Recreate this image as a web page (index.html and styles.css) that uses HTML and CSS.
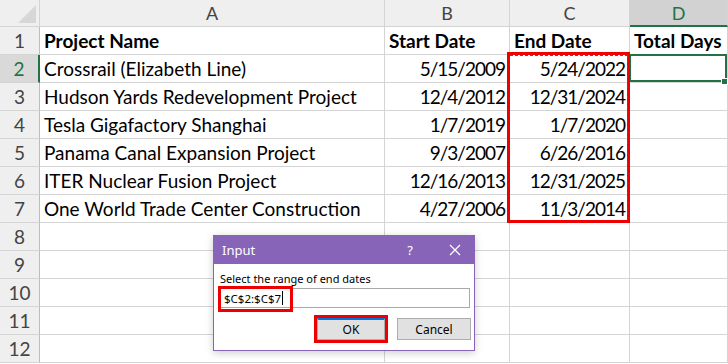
FILE: index.html
```html
<!DOCTYPE html>
<html>
<head>
<meta charset="utf-8">
<link rel="stylesheet" href="styles.css">
</head>
<body>
<div class="sheet">
  <div class="grid">
    <div class="corner"><span class="tri"></span></div>
    <div class="ch">A</div><div class="ch">B</div><div class="ch">C</div><div class="ch ch-sel">D</div>

    <div class="rh">1</div><div class="c bold">Project Name</div><div class="c bold">Start Date</div><div class="c bold">End Date</div><div class="c bold">Total Days</div>
    <div class="rh rh-sel">2</div><div class="c">Crossrail (Elizabeth Line)</div><div class="c num">5/15/2009</div><div class="c num">5/24/2022</div><div class="c active"><span class="handle"></span></div>
    <div class="rh">3</div><div class="c">Hudson Yards Redevelopment Project</div><div class="c num">12/4/2012</div><div class="c num">12/31/2024</div><div class="c"></div>
    <div class="rh">4</div><div class="c">Tesla Gigafactory Shanghai</div><div class="c num">1/7/2019</div><div class="c num">1/7/2020</div><div class="c"></div>
    <div class="rh">5</div><div class="c">Panama Canal Expansion Project</div><div class="c num">9/3/2007</div><div class="c num">6/26/2016</div><div class="c"></div>
    <div class="rh">6</div><div class="c">ITER Nuclear Fusion Project</div><div class="c num">12/16/2013</div><div class="c num">12/31/2025</div><div class="c"></div>
    <div class="rh">7</div><div class="c">One World Trade Center Construction</div><div class="c num">4/27/2006</div><div class="c num">11/3/2014</div><div class="c"></div>
    <div class="rh">8</div><div class="c"></div><div class="c"></div><div class="c"></div><div class="c"></div>
    <div class="rh">9</div><div class="c"></div><div class="c"></div><div class="c"></div><div class="c"></div>
    <div class="rh">10</div><div class="c"></div><div class="c"></div><div class="c"></div><div class="c"></div>
    <div class="rh">11</div><div class="c"></div><div class="c"></div><div class="c"></div><div class="c"></div>
    <div class="rh">12</div><div class="c"></div><div class="c"></div><div class="c"></div><div class="c"></div>
  </div>

  <div class="range"><div class="ants"></div></div>

  <div class="dialog">
    <div class="titlebar">
      <span class="title">Input</span>
      <span class="help">?</span>
      <svg class="close" width="12" height="12" viewBox="0 0 12 12"><path d="M1 1L11 11M11 1L1 11" stroke="#fff" stroke-width="1.3" fill="none"/></svg>
    </div>
    <div class="body">
      <div class="label">Select the range of end dates</div>
      <div class="input"><span class="val">$C$2:$C$7</span><span class="caret"></span></div>
      <div class="buttons">
        <button class="btn ok">OK</button>
        <button class="btn">Cancel</button>
      </div>
    </div>
  </div>
</div>
</body>
</html>
```
FILE: styles.css
```css
html, body {
  margin: 0;
  padding: 0;
  background: #fff;
  overflow: hidden;
}
.sheet {
  position: relative;
  width: 728px;
  height: 364px;
  overflow: hidden;
  font-family: Lato, "Open Sans", sans-serif;
}
.grid {
  display: grid;
  grid-template-columns: 40px 345px 125px 120px 98px;
  grid-template-rows: 27px repeat(12, 28px);
}
.grid > div {
  box-sizing: border-box;
  border-right: 1px solid #d4d4d4;
  border-bottom: 1px solid #d4d4d4;
  white-space: nowrap;
  overflow: visible;
}
.corner {
  background: #efefef;
  position: relative;
}
.corner .tri {
  position: absolute;
  right: 3px;
  bottom: 3px;
  width: 0;
  height: 0;
  border-left: 18px solid transparent;
  border-bottom: 18px solid #d7d7d7;
}
.ch {
  background: #efefef;
  color: #444;
  font-size: 18px;
  text-align: center;
  line-height: 26px;
}
.ch-sel {
  background: #d2d2d2;
  color: #217346;
  border-bottom: 2px solid #217346 !important;
}
.rh {
  background: #efefef;
  color: #444;
  font-size: 19px;
  text-align: center;
  line-height: 27px;
  border-right-color: #bdbdbd !important;
}
.rh-sel {
  background: #d9d9d9;
  color: #217346;
  border-right: 2px solid #217346 !important;
}
.c {
  font-size: 19px;
  color: #000;
  line-height: 28px;
  padding: 0 4px;
}
.bold {
  font-weight: bold;
}
.num {
  text-align: right;
  padding-right: 4px;
  letter-spacing: -1px;
}
.active {
  position: relative;
  box-shadow: inset 0 0 0 2px #217346;
  margin-left: -1px;
  margin-top: -1px;
}
.handle {
  position: absolute;
  right: -1px;
  bottom: -3px;
  width: 5px;
  height: 5px;
  background: #217346;
  border: 1px solid #fff;
}
.range {
  position: absolute;
  left: 507px;
  top: 52px;
  width: 123px;
  height: 171px;
  box-sizing: border-box;
  border: 3px solid #ee0000;
}
.ants {
  position: absolute;
  left: 0;
  top: 0;
  right: -1px;
  bottom: 0;
  border-top: 1px dashed #217346;
  border-right: 1px dashed #217346;
}
.dialog {
  position: absolute;
  left: 213px;
  top: 235px;
  width: 262px;
  height: 116px;
  box-sizing: border-box;
  border: 1px solid #8764b8;
  background: #fff;
  box-shadow: 0 2px 8px rgba(0,0,0,0.2);
  font-family: "Noto Sans", "Open Sans", sans-serif;
}
.titlebar {
  background: #8764b8;
  height: 28px;
  display: flex;
  align-items: center;
  color: #fff;
  padding-left: 8px;
}
.title {
  font-size: 13px;
  flex: 1;
}
.help {
  font-size: 13px;
  margin-right: 36px;
}
.close {
  margin-right: 13px;
}
.body {
  padding: 8px 0 0 6px;
}
.label {
  font-size: 11px;
  color: #000;
  line-height: 14px;
  height: 16px;
}
.input {
  width: 250px;
  height: 20px;
  box-sizing: border-box;
  border: 1px solid #aaa;
  display: flex;
  align-items: center;
  padding-left: 3px;
  position: relative;
}
.val {
  font-size: 11.5px;
  color: #000;
}
.caret {
  width: 1px;
  height: 14px;
  background: #000;
  margin-left: 1px;
}
.input::after {
  content: "";
  position: absolute;
  left: -3px;
  top: -3px;
  width: 75px;
  height: 26px;
  box-sizing: border-box;
  border: 3px solid #ee0000;
}
.buttons {
  display: flex;
  justify-content: flex-end;
  gap: 12px;
  margin-top: 10px;
  padding-right: 3px;
}
.btn {
  font-family: "Noto Sans", "Open Sans", sans-serif;
  font-size: 12px;
  height: 22px;
  width: 74px;
  background: #e1e1e1;
  border: 1px solid #adadad;
  color: #000;
  padding: 0;
}
.ok {
  width: 68px;
  position: relative;
  border-top: 2px solid #0078d7;
}
.ok::after {
  content: "";
  position: absolute;
  left: -4px;
  top: -5px;
  right: -4px;
  bottom: -4px;
  border: 3px solid #ee0000;
}
```
